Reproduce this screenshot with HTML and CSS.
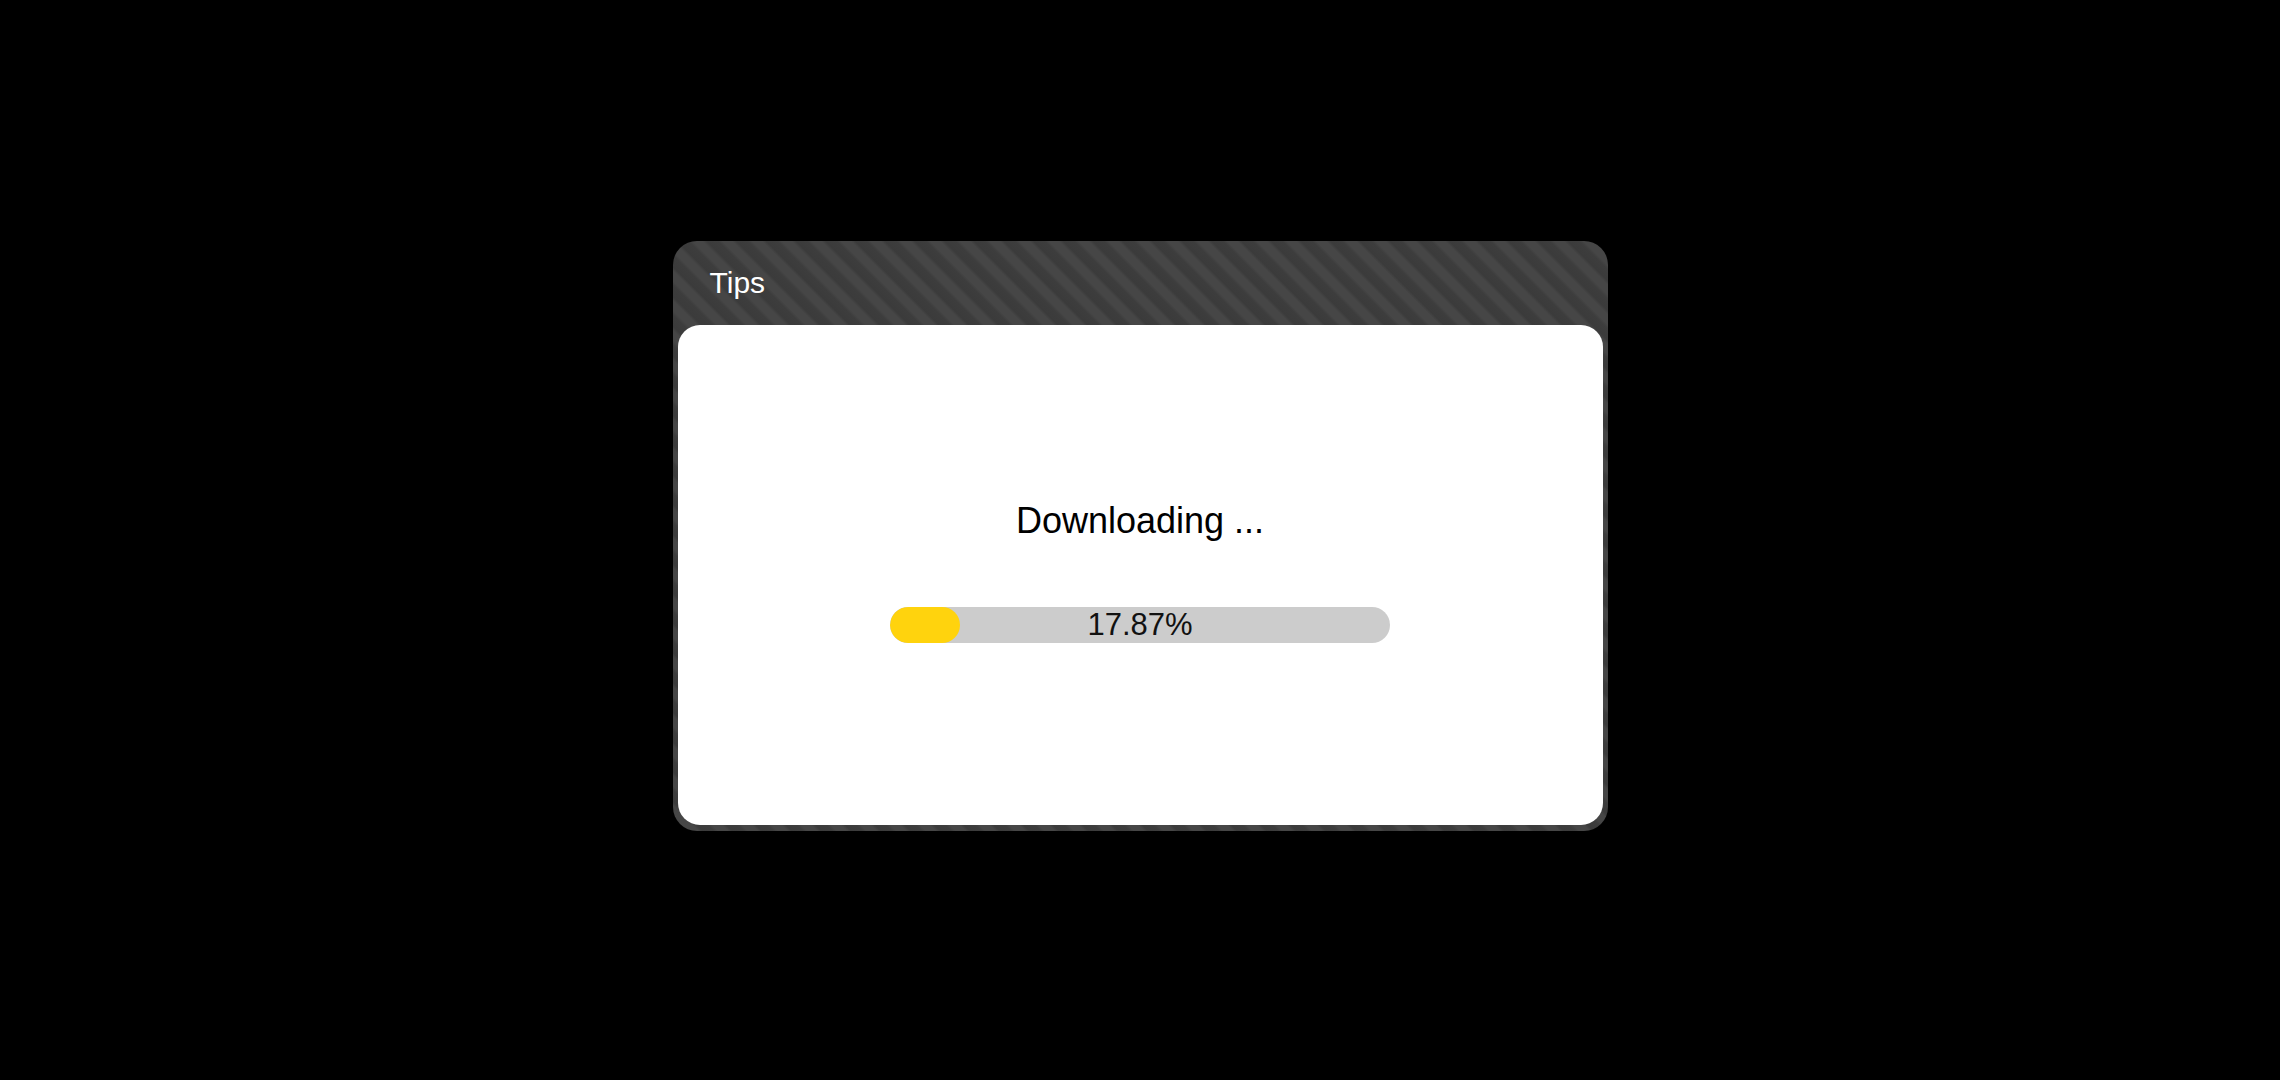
FILE: index.html
```html
<!DOCTYPE html>
<html>
<head>
<meta charset="utf-8">
<link rel="stylesheet" href="styles.css">
</head>
<body>
<div class="page">
  <div class="dialog">
    <div class="dialog-header">Tips</div>
    <div class="dialog-body">
      <div class="status">Downloading ...</div>
      <div class="progress">
        <div class="progress-fill" style="width: 70px"></div>
        <div class="progress-label">17.87%</div>
      </div>
    </div>
  </div>
</div>
</body>
</html>
```
FILE: styles.css
```css
html, body {
  margin: 0;
  padding: 0;
  background: #000;
  width: 2280px;
  height: 1080px;
  overflow: hidden;
}
.page {
  display: flex;
  justify-content: center;
  padding-top: 241px;
  font-family: "Liberation Sans", Arial, sans-serif;
}
.dialog {
  width: 935px;
  height: 590px;
  box-sizing: border-box;
  border-radius: 24px;
  padding: 0 5px 6px 5px;
  display: flex;
  flex-direction: column;
  background: repeating-linear-gradient(45deg, #3b3b3b 0px, #3d3d3d 8px, #464646 11px, #464646 18px, #3b3b3b 21px);
}
.dialog-header {
  height: 84px;
  line-height: 84px;
  padding-left: 32px;
  color: #fff;
  font-size: 30px;
  flex: none;
}
.dialog-body {
  flex: 1;
  background: #fff;
  border-radius: 22px;
  display: flex;
  flex-direction: column;
  align-items: center;
  padding-top: 175px;
  box-sizing: border-box;
}
.status {
  font-size: 36px;
  line-height: 41px;
  color: #000;
}
.progress {
  margin-top: 66px;
  width: 500px;
  height: 36px;
  border-radius: 18px;
  background: #cccccc;
  position: relative;
  overflow: hidden;
}
.progress-fill {
  height: 100%;
  border-radius: 18px;
  background: #ffd30d;
}
.progress-label {
  position: absolute;
  left: 0;
  top: 0;
  right: 0;
  text-align: center;
  line-height: 36px;
  font-size: 31px;
  color: #111;
}
```
